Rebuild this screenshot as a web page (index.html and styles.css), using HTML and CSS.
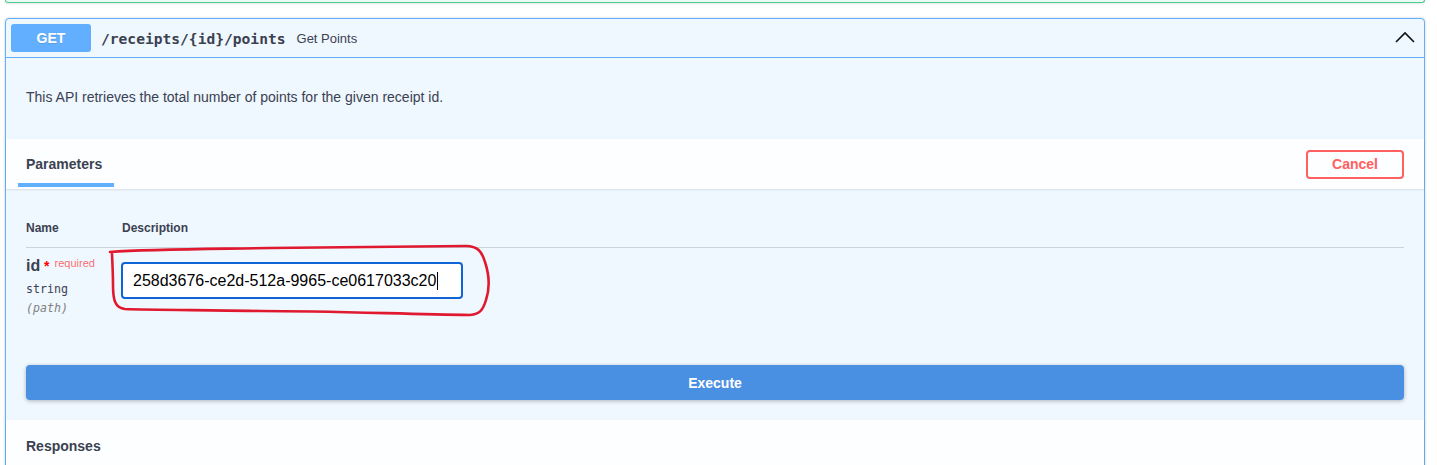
FILE: index.html
```html
<!DOCTYPE html>
<html>
<head>
<meta charset="utf-8">
<link rel="stylesheet" href="styles.css">
</head>
<body>
<div class="page">
  <div class="prev-block"></div>
  <div class="opblock">
    <div class="summary">
      <span class="method">GET</span>
      <span class="path">/receipts/{id}/points</span>
      <span class="summary-desc">Get Points</span>
      <svg class="arrow" width="20" height="20" viewBox="0 0 20 20"><polyline points="1,14 10,5 19,14" fill="none" stroke="#111" stroke-width="1.6"/></svg>
    </div>
    <div class="body-desc">This API retrieves the total number of points for the given receipt id.</div>
    <div class="section-header">
      <div class="tab">
        <span class="tab-title">Parameters</span>
        <span class="tab-underline"></span>
      </div>
      <button class="cancel">Cancel</button>
    </div>
    <div class="params">
      <div class="param-head">
        <div class="col-name">Name</div>
        <div class="col-desc">Description</div>
      </div>
      <div class="param-row">
        <div class="col-name">
          <div class="pname">id<span class="star">&nbsp;*</span><span class="req">required</span></div>
          <div class="ptype">string</div>
          <div class="pin">(path)</div>
        </div>
        <div class="col-desc">
          <div class="input">258d3676-ce2d-512a-9965-ce0617033c20<span class="caret"></span></div>
        </div>
      </div>
      <div class="execute-wrap">
        <button class="execute">Execute</button>
      </div>
    </div>
    <div class="responses-header">Responses</div>
  </div>
  <svg class="annotation" width="1437" height="465" viewBox="0 0 1437 465">
    <path d="M110,252 C150,249 210,249 270,248 C340,247 410,246 466,246 C478,246 482,252 485,262 C489,274 490,288 486,300 C483,310 480,314 470,315 C400,314 330,311 260,311 C200,310 150,310 125,309 C115,308 113,300 113,285 C113,270 112,258 112,252" fill="none" stroke="#e0192f" stroke-width="2.6" stroke-linecap="round" stroke-linejoin="round"/>
  </svg>
</div>
</body>
</html>
```

FILE: styles.css
```css
html, body {
  margin: 0;
  padding: 0;
  background: #ffffff;
}
body {
  font-family: "Liberation Sans", Arial, sans-serif;
  color: #3b4151;
  overflow: hidden;
}
.page {
  position: relative;
  width: 1437px;
  height: 465px;
  overflow: hidden;
}
.prev-block {
  margin: 0 12px 15px 5px;
  height: 2px;
  border: 1px solid #49cc90;
  border-top: none;
  border-radius: 0 0 4px 4px;
  background: rgba(73, 204, 144, 0.1);
  box-shadow: 0 0 3px rgba(0, 0, 0, 0.19);
}
.opblock {
  margin-left: 5px;
  width: 1420px;
  box-sizing: border-box;
  border: 1px solid #61affe;
  border-radius: 4px;
  background: #eff7ff;
  box-shadow: 0 0 3px rgba(0, 0, 0, 0.19);
}
.summary {
  display: flex;
  align-items: center;
  padding: 5px;
  border-bottom: 1px solid #61affe;
}
.method {
  width: 80px;
  height: 28px;
  line-height: 28px;
  text-align: center;
  background: #61affe;
  color: #ffffff;
  font-weight: bold;
  font-size: 14px;
  border-radius: 3px;
  text-shadow: 0 1px 0 rgba(0, 0, 0, 0.1);
}
.path {
  padding: 0 11px 0 10px;
  font-family: "DejaVu Sans Mono", monospace;
  font-weight: bold;
  font-size: 14.6px;
  color: #3b4151;
}
.summary-desc {
  font-size: 13px;
  color: #3b4151;
  flex: 1;
}
.arrow {
  margin-right: 4px;
}
.body-desc {
  padding: 30px 20px 32px 20px;
  font-size: 14px;
  line-height: 19px;
}
.section-header {
  display: flex;
  align-items: center;
  justify-content: space-between;
  height: 50px;
  padding: 0 20px 0 12px;
  background: rgba(255, 255, 255, 0.8);
  box-shadow: 0 1px 2px rgba(0, 0, 0, 0.1);
  position: relative;
}
.tab {
  display: flex;
  flex-direction: column;
  align-self: flex-start;
  padding-top: 17px;
}
.tab-title {
  padding: 0 8px;
  font-size: 14px;
  font-weight: bold;
  line-height: 17px;
  color: #3b4151;
}
.tab-underline {
  display: block;
  margin-top: 10px;
  width: 96px;
  height: 4px;
  background: #61affe;
}
.cancel {
  width: 98px;
  height: 29px;
  box-sizing: border-box;
  border: 2px solid #ff6060;
  border-radius: 4px;
  background: transparent;
  color: #ff6060;
  font-family: "Liberation Sans", Arial, sans-serif;
  font-size: 14px;
  font-weight: bold;
  padding: 0;
}
.params {
  padding: 20px 20px 20px 20px;
}
.param-head {
  display: flex;
  padding: 12px 0 12px 0;
  border-bottom: 1px solid rgba(59, 65, 81, 0.2);
  font-size: 12px;
  font-weight: bold;
  line-height: 14px;
}
.col-name {
  width: 96px;
  flex: none;
}
.col-desc {
  flex: 1;
}
.param-row {
  display: flex;
  padding-top: 10px;
}
.pname {
  font-size: 16px;
  font-weight: bold;
  line-height: 16px;
}
.star {
  color: #ff0000;
  font-size: 14px;
}
.req {
  font-size: 11px;
  font-weight: normal;
  color: rgba(255, 0, 0, 0.6);
  position: relative;
  top: -4px;
  padding-left: 5px;
}
.ptype {
  margin-top: 7px;
  font-family: "DejaVu Sans Mono", monospace;
  font-size: 11.6px;
  line-height: 14px;
}
.pin {
  margin-top: 5px;
  font-family: "DejaVu Sans Mono", monospace;
  font-size: 11.6px;
  font-style: italic;
  line-height: 14px;
  color: #808080;
}
.input {
  margin-top: 4px;
  margin-left: -1px;
  width: 342px;
  height: 37px;
  box-sizing: border-box;
  border: 2px solid #1164d6;
  border-radius: 4px;
  background: #ffffff;
  padding: 0 10px;
  display: flex;
  align-items: center;
  font-size: 16px;
  color: #000000;
}
.caret {
  display: inline-block;
  width: 1px;
  height: 18px;
  background: #000000;
  margin-left: 1px;
}
.execute-wrap {
  padding-top: 50px;
}
.execute {
  display: block;
  width: 100%;
  height: 35px;
  border: none;
  border-radius: 4px;
  background: #4990e2;
  color: #ffffff;
  font-family: "Liberation Sans", Arial, sans-serif;
  font-size: 14px;
  font-weight: bold;
  box-shadow: 0 1px 4px rgba(0, 0, 0, 0.28);
}
.responses-header {
  height: 50px;
  box-sizing: border-box;
  display: flex;
  align-items: center;
  padding: 1px 20px 0 20px;
  background: rgba(255, 255, 255, 0.8);
  box-shadow: 0 1px 2px rgba(0, 0, 0, 0.1);
  font-size: 14px;
  font-weight: bold;
}
.annotation {
  position: absolute;
  left: 0;
  top: 0;
  pointer-events: none;
}
```
